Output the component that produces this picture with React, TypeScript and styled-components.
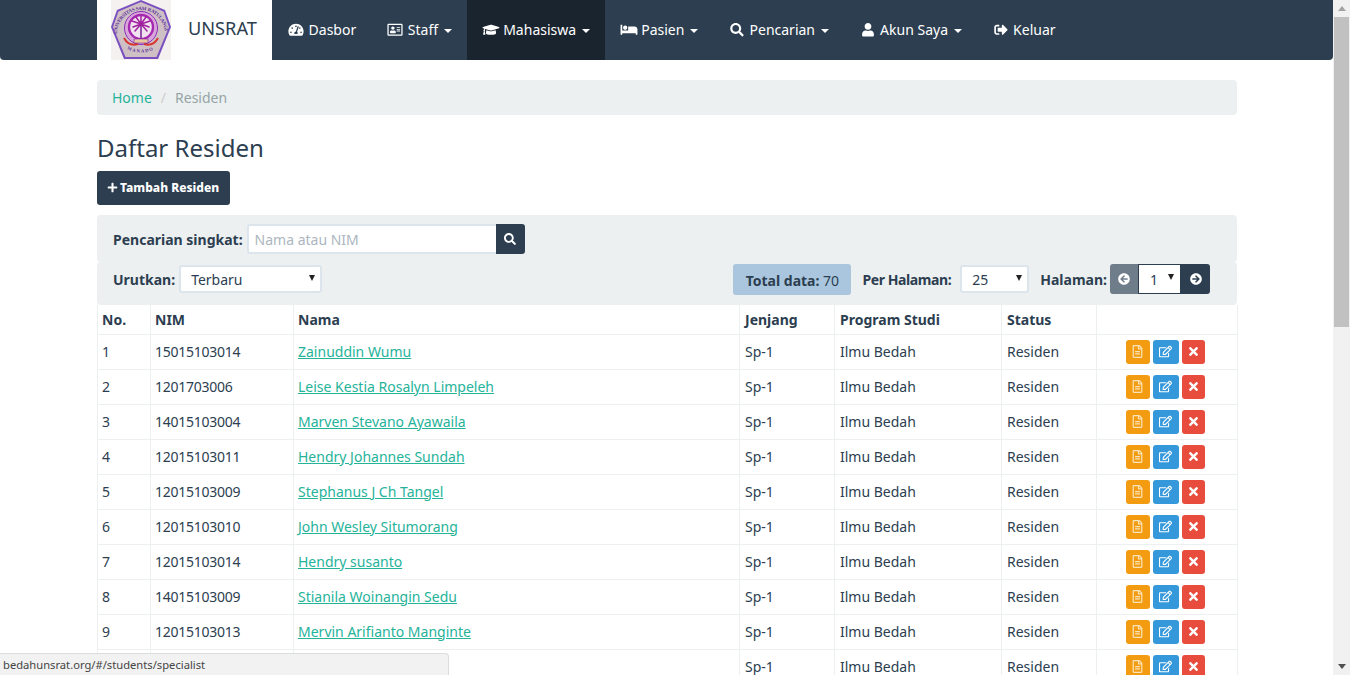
import * as React from 'react';
import styled, { createGlobalStyle } from 'styled-components';
import {
	FaArrowCircleLeft,
	FaArrowCircleRight,
	FaBed,
	FaGraduationCap,
	FaPlus,
	FaRegAddressCard,
	FaRegEdit,
	FaRegFileAlt,
	FaSearch,
	FaSignOutAlt,
	FaTachometerAlt,
	FaTimes,
	FaUser,
} from 'react-icons/fa';

const DARK = '#2c3e50';
const LIGHT = '#ecf0f1';
const GREEN = '#25b39a';

const GlobalStyle = createGlobalStyle`
	html, body {
		margin: 0;
		height: 100%;
		overflow: hidden;
		background: #fff;
	}
	body {
		font-family: 'Noto Sans', 'Open Sans', sans-serif;
		font-size: 14px;
		line-height: 1.42857;
		color: ${DARK};
	}
	* {
		box-sizing: border-box;
	}
`;

const Page = styled.div`
	display: flex;
	height: 675px;
	overflow: hidden;
	position: relative;
`;

const Main = styled.div`
	flex: 1;
	min-width: 0;
`;

const Navbar = styled.nav`
	height: 60px;
	background: ${DARK};
	border-radius: 0 0 4px 4px;
	padding: 0 97px;
	display: flex;
`;

const Brand = styled.a`
	width: 175px;
	height: 60px;
	background: #fff;
	display: flex;
	align-items: center;
	padding-left: 14px;
	font-size: 18.2px;
	color: ${DARK};
	padding-bottom: 4px;
`;

const BrandName = styled.span`
	margin-left: 17px;
`;

const LogoBox = styled.svg`
	width: 60px;
	height: 60px;
	margin-bottom: -4px;
	flex: none;
`;

const NavItem = styled.a<{ $active?: boolean }>`
	display: flex;
	align-items: center;
	height: 60px;
	padding: 0 15px;
	color: #fff;
	background: ${(props) => (props.$active ? '#1a242f' : 'transparent')};

	svg {
		flex: none;
		width: 18px;
		height: 13.5px;
		margin-right: 3.6px;
	}
`;

const Caret = styled.span`
	width: 0;
	height: 0;
	margin-left: 5.5px;
	margin-top: 2px;
	border-top: 4px solid #fff;
	border-left: 4px solid transparent;
	border-right: 4px solid transparent;
`;

const Container = styled.div`
	width: 1140px;
	margin: 0 0 0 97px;
	padding-top: 20px;
`;

const Breadcrumb = styled.div`
	height: 35px;
	background: ${LIGHT};
	border-radius: 4px;
	padding: 0 15px;
	display: flex;
	align-items: center;
	color: #95a5a6;
`;

const HomeLink = styled.a`
	color: ${GREEN};
`;

const Slash = styled.span`
	color: #ccc;
	padding: 0 9px;
`;

const Title = styled.h2`
	margin: 16px 0 6px;
	font-size: 24px;
	line-height: 34px;
	font-weight: 400;
`;

const AddButton = styled.button`
	display: flex;
	align-items: center;
	gap: 2px;
	width: 133px;
	height: 34px;
	margin: 0 0 10px;
	padding: 0 0 2px 10px;
	border: 0;
	border-radius: 3px;
	background: ${DARK};
	color: #fff;
	font-family: inherit;
	font-size: 12px;
	font-weight: 800;
`;

const FilterRow = styled.div<{ $height: number }>`
	height: ${(props) => props.$height}px;
	background: ${LIGHT};
	border-radius: 4px;
	padding: 0 27px 0 16px;
	display: flex;
	align-items: flex-start;
`;

const SearchRow = styled(FilterRow)`
	padding-top: 9px;
`;

const SortRow = styled(FilterRow)`
	padding-top: 2px;
`;

const Label = styled.label<{ $gap?: number; $tight?: boolean }>`
	font-weight: 700;
	line-height: 32px;
	margin-right: ${(props) => props.$gap ?? 4}px;
	letter-spacing: ${(props) => (props.$tight ? '-0.4px' : 'normal')};
	white-space: nowrap;
`;

const SearchInput = styled.input`
	width: 249px;
	height: 30px;
	padding: 0 6px;
	border: 2px solid #dce4ec;
	border-right: 0;
	border-radius: 3px 0 0 3px;
	font-family: inherit;
	font-size: 14px;
	color: ${DARK};
	background: #fff;
	outline: none;

	&::placeholder {
		color: #acb6c0;
	}
`;

const IconButton = styled.button<{ $color: string; $width: number; $radius: string }>`
	display: flex;
	align-items: center;
	justify-content: center;
	flex: none;
	width: ${(props) => props.$width}px;
	height: 30px;
	padding: 0;
	border: 0;
	border-radius: ${(props) => props.$radius};
	background: ${(props) => props.$color};
	color: #fff;
	font-size: 12px;
`;

const SelectWrap = styled.div<{ $width: number; $margin?: number }>`
	position: relative;
	width: ${(props) => props.$width}px;
	flex: none;
	margin-top: 1px;
	margin-right: ${(props) => props.$margin ?? 0}px;

	&::after {
		content: '';
		position: absolute;
		top: 10px;
		right: 7px;
		border-top: 6px solid #222;
		border-left: 3px solid transparent;
		border-right: 3px solid transparent;
		pointer-events: none;
	}
`;

const Select = styled.select`
	appearance: none;
	display: block;
	width: 100%;
	height: 28px;
	padding: 0 0 0 10px;
	border: 2px solid #dce4ec;
	border-radius: 3px;
	background: #fff;
	font-family: inherit;
	font-size: 14px;
	color: ${DARK};
`;

const PagerSelectWrap = styled(SelectWrap)`
	margin-top: 0;
`;

const PagerSelect = styled(Select)`
	height: 30px;
	border: 1px solid ${DARK};
	border-radius: 0;
	padding-left: 11px;
`;

const Spacer = styled.div`
	flex: 1;
`;

const TotalBadge = styled.div`
	width: 118px;
	height: 31px;
	margin-right: 11px;
	background: #a9c6de;
	border-radius: 3px;
	line-height: 33px;
	text-align: center;
	white-space: nowrap;

	b {
		font-weight: 700;
	}
`;

const Table = styled.table`
	width: 1140px;
	table-layout: fixed;
	border-collapse: collapse;

	th, td {
		border: 1px solid #ecf0f1;
		padding: 0 5px;
		text-align: left;
		white-space: nowrap;
		overflow: hidden;
	}
	th:nth-child(-n + 3), td:nth-child(-n + 3) {
		padding-left: 4px;
	}
	th {
		height: 29px;
		padding-top: 2px;
		border-top: 0;
		font-weight: 700;
	}
	td {
		height: 35px;
	}
`;

const NimCell = styled.td`
	letter-spacing: -0.25px;
`;

const NameLink = styled.a`
	color: ${GREEN};
	text-decoration: underline;
`;

const Actions = styled.div`
	display: flex;
	justify-content: center;
	gap: 3px;
	padding-right: 4px;
`;

const ActionButton = styled.button<{ $color: string; $width: number }>`
	display: flex;
	align-items: center;
	justify-content: center;
	width: ${(props) => props.$width}px;
	height: 24px;
	padding: 0;
	border: 0;
	border-radius: 3px;
	background: ${(props) => props.$color};
	color: #fff;
	font-size: 13px;
`;

const PaleIcon = styled.span`
	display: flex;
	color: #fbe3b8;
`;

const Scrollbar = styled.div`
	width: 17px;
	flex: none;
	background: #f1f1f1;
	display: flex;
	flex-direction: column;
	align-items: center;
`;

const ArrowUp = styled.span`
	margin-top: 6px;
	border-bottom: 5px solid #a3a3a3;
	border-left: 4px solid transparent;
	border-right: 4px solid transparent;
`;

const Thumb = styled.div`
	width: 15px;
	height: 310px;
	margin-top: 6px;
	background: #c1c1c1;
`;

const ArrowDown = styled.span`
	margin-top: auto;
	margin-bottom: 6px;
	border-top: 5px solid #505050;
	border-left: 4px solid transparent;
	border-right: 4px solid transparent;
`;

const StatusBar = styled.div`
	position: absolute;
	left: 0;
	bottom: 0;
	width: 449px;
	height: 22px;
	padding: 2px 0 0 3px;
	background: #f2f2f2;
	border: 1px solid #dcdcdc;
	border-left: 0;
	border-bottom: 0;
	border-radius: 0 4px 0 0;
	font-size: 11.2px;
	line-height: 18px;
	color: #444;
`;

const navItems = [
	{ label: 'Dasbor', icon: <FaTachometerAlt /> },
	{ label: 'Staff', icon: <FaRegAddressCard />, menu: true },
	{ label: 'Mahasiswa', icon: <FaGraduationCap />, menu: true, active: true },
	{ label: 'Pasien', icon: <FaBed />, menu: true },
	{ label: 'Pencarian', icon: <FaSearch />, menu: true },
	{ label: 'Akun Saya', icon: <FaUser />, menu: true },
	{ label: 'Keluar', icon: <FaSignOutAlt /> },
];

// the last row runs under the status bar, its number, NIM and name can't be read
const residents = [
	{ nim: '15015103014', name: 'Zainuddin Wumu' },
	{ nim: '1201703006', name: 'Leise Kestia Rosalyn Limpeleh' },
	{ nim: '14015103004', name: 'Marven Stevano Ayawaila' },
	{ nim: '12015103011', name: 'Hendry Johannes Sundah' },
	{ nim: '12015103009', name: 'Stephanus J Ch Tangel' },
	{ nim: '12015103010', name: 'John Wesley Situmorang' },
	{ nim: '12015103014', name: 'Hendry susanto' },
	{ nim: '14015103009', name: 'Stianila Woinangin Sedu' },
	{ nim: '12015103013', name: 'Mervin Arifianto Manginte' },
	{ nim: '', name: '' },
];

const columnWidths = [53, 143, 446, 95, 167, 95, 141];

const Logo = () => (
	<LogoBox viewBox="0 0 60 60">
		<defs>
			<path id="logo-arc" d="M6 34 A24 24 0 0 1 54 34" />
			<path id="logo-arc-bottom" d="M16 49 Q30 56 44 49" />
		</defs>
		<rect width="60" height="60" fill="#f5f1f0" />
		<polygon points="30,0 54,10 60,27 47,59 13,59 0,27 6,10" fill="#7a4fc0" />
		<polygon points="30,2 52.5,11.5 58,27 45.5,57 14.5,57 2,27 7.5,11.5" fill="#cfc0c6" />
		<text fontSize="5" fontWeight="700" fill="#5b2d9b" fontFamily="'Liberation Serif', serif">
			<textPath href="#logo-arc" textLength="72">UNIVERSITAS SAM RATULANGI</textPath>
		</text>
		<text fontSize="4.6" fontWeight="700" fill="#5b2d9b" fontFamily="'Liberation Serif', serif">
			<textPath href="#logo-arc-bottom" textLength="27">MANADO</textPath>
		</text>
		<circle cx="30" cy="28" r="16.5" fill="#d9a6dc" stroke="#8a2fb8" strokeWidth="1" />
		<circle cx="30" cy="27" r="12" fill="#f1e2ef" stroke="#a428b0" strokeWidth="2.4" />
		<path d="M13 38 Q18 47 27 44 M47 38 Q42 47 33 44" fill="none" stroke="#d8362f" strokeWidth="2" />
		<rect x="29.2" y="24" width="1.6" height="14" fill="#7f2a9c" />
		<path
			d="M30 24 L21 21 M30 24 L22 27 M30 24 L24 31 M30 24 L39 21 M30 24 L38 27 M30 24 L36 31 M30 24 L25 17 M30 24 L35 17 M30 24 L30 16"
			stroke="#a0209f"
			strokeWidth="1.5"
			strokeLinecap="round"
		/>
		<rect x="23" y="39" width="14" height="4" fill="#e8c8a0" stroke="#7f2a9c" strokeWidth="0.6" />
	</LogoBox>
);

const App = () => {
	return (
		<Page>
			<GlobalStyle />
			<Main>
				<Navbar>
					<Brand>
						<Logo />
						<BrandName>UNSRAT</BrandName>
					</Brand>
					{navItems.map((item) => (
						<NavItem key={item.label} $active={item.active}>
							{item.icon}
							<span>{item.label}</span>
							{item.menu && <Caret />}
						</NavItem>
					))}
				</Navbar>
				<Container>
					<Breadcrumb>
						<HomeLink>Home</HomeLink>
						<Slash>/</Slash>
						Residen
					</Breadcrumb>
					<Title>Daftar Residen</Title>
					<AddButton>
						<FaPlus size={11} />
						Tambah Residen
					</AddButton>
					<SearchRow $height={47}>
						<Label>Pencarian singkat:</Label>
						<SearchInput placeholder="Nama atau NIM" />
						<IconButton $color={DARK} $width={29} $radius="0 3px 3px 0">
							<FaSearch />
						</IconButton>
					</SearchRow>
					<SortRow $height={43}>
						<Label>Urutkan:</Label>
						<SelectWrap $width={143}>
							<Select defaultValue="Terbaru">
								<option>Terbaru</option>
							</Select>
						</SelectWrap>
						<Spacer />
						<TotalBadge>
							<b>Total data:</b> 70
						</TotalBadge>
						<Label $gap={9} $tight>Per Halaman:</Label>
						<SelectWrap $width={69} $margin={11}>
							<Select defaultValue="25">
								<option>25</option>
							</Select>
						</SelectWrap>
						<Label $gap={3}>Halaman:</Label>
						<IconButton $color="#6f7d8a" $width={28} $radius="3px 0 0 3px">
							<FaArrowCircleLeft />
						</IconButton>
						<PagerSelectWrap $width={43}>
							<PagerSelect defaultValue="1">
								<option>1</option>
							</PagerSelect>
						</PagerSelectWrap>
						<IconButton $color={DARK} $width={29} $radius="0 3px 3px 0">
							<FaArrowCircleRight />
						</IconButton>
					</SortRow>
					<Table>
						<colgroup>
							{columnWidths.map((width, index) => (
								<col key={index} width={width} />
							))}
						</colgroup>
						<thead>
							<tr>
								<th>No.</th>
								<th>NIM</th>
								<th>Nama</th>
								<th>Jenjang</th>
								<th>Program Studi</th>
								<th>Status</th>
								<th />
							</tr>
						</thead>
						<tbody>
							{residents.map((resident, index) => (
								<tr key={index}>
									<td>{index + 1}</td>
									<NimCell>{resident.nim}</NimCell>
									<td>
										<NameLink>{resident.name}</NameLink>
									</td>
									<td>Sp-1</td>
									<td>Ilmu Bedah</td>
									<td>Residen</td>
									<td>
										<Actions>
											<ActionButton $color="#f39c12" $width={24}>
												<PaleIcon>
													<FaRegFileAlt />
												</PaleIcon>
											</ActionButton>
											<ActionButton $color="#3498db" $width={26}>
												<FaRegEdit />
											</ActionButton>
											<ActionButton $color="#e74c3c" $width={23}>
												<FaTimes />
											</ActionButton>
										</Actions>
									</td>
								</tr>
							))}
						</tbody>
					</Table>
				</Container>
			</Main>
			<Scrollbar>
				<ArrowUp />
				<Thumb />
				<ArrowDown />
			</Scrollbar>
			<StatusBar>bedahunsrat.org/#/students/specialist</StatusBar>
		</Page>
	);
};

export default App;
